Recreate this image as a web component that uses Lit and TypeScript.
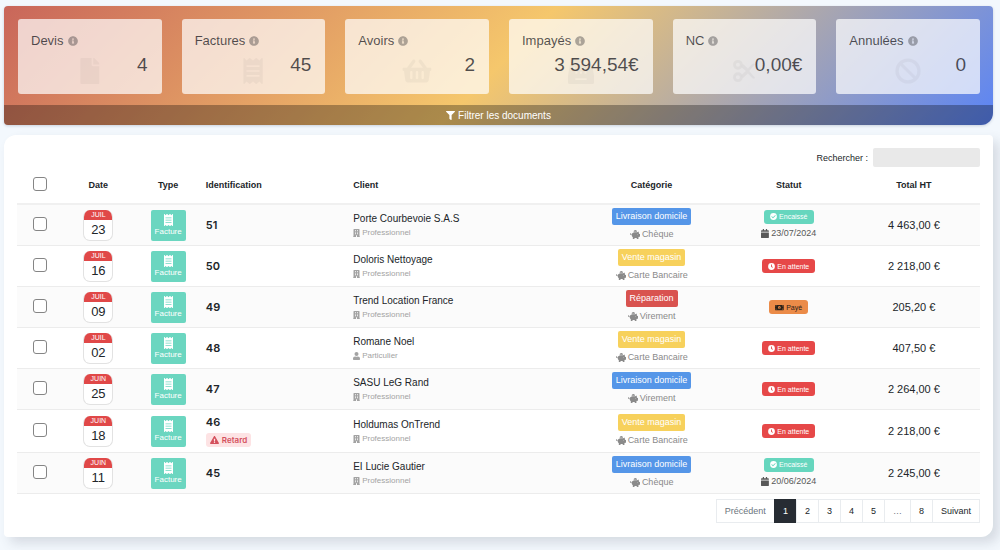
import { LitElement, html, css, svg, nothing } from "lit";
import { customElement, property } from "lit/decorators.js";

type Glyph = { box: string; body: unknown };

const ICONS: Record<string, Glyph> = {
  info: {
    box: "0 0 512 512",
    body: svg`<path d="M256 8C119.043 8 8 119.083 8 256c0 136.997 111.043 248 248 248s248-111.003 248-248C504 119.083 392.957 8 256 8zm0 110c23.196 0 42 18.804 42 42s-18.804 42-42 42-42-18.804-42-42 18.804-42 42-42zm56 254c0 6.627-5.373 12-12 12h-88c-6.627 0-12-5.373-12-12v-24c0-6.627 5.373-12 12-12h12v-64h-12c-6.627 0-12-5.373-12-12v-24c0-6.627 5.373-12 12-12h64c6.627 0 12 5.373 12 12v100h12c6.627 0 12 5.373 12 12v24z"/>`,
  },
  file: {
    box: "0 0 384 512",
    body: svg`<path d="M224 136V0H24C10.7 0 0 10.7 0 24v464c0 13.3 10.7 24 24 24h336c13.3 0 24-10.7 24-24V160H248c-13.2 0-24-10.8-24-24zm160-14.1v6.1H256V0h6.1c6.4 0 12.5 2.5 17 7l97.9 98c4.500 4.500 7 10.600 7 16.900z"/>`,
  },
  receipt: {
    box: "0 0 384 512",
    body: svg`<path fill-rule="evenodd" d="M358.4 3.200L320 48 265.600 3.200a15.900 15.900 0 0 0-19.200 0L192 48 137.600 3.200a15.900 15.900 0 0 0-19.200 0L64 48 25.600 3.200C15-4.700 0 2.800 0 16v480c0 13.200 15 20.700 25.600 12.800L64 464l54.400 44.800a15.900 15.900 0 0 0 19.200 0L192 464l54.400 44.800a15.900 15.900 0 0 0 19.200 0L320 464l38.400 44.800c10.500 7.900 25.600.4 25.600-12.800V16c0-13.200-15-20.700-25.600-12.800zM64 144h256v32H64zM64 240h256v32H64zM64 336h256v32H64z"/>`,
  },
  basket: {
    box: "0 0 576 512",
    body: svg`<path d="M576 216v16c0 13.255-10.745 24-24 24h-8l-26.113 182.788C514.509 462.435 494.257 480 470.370 480H105.630c-23.887 0-44.139-17.565-47.518-41.212L32 256h-8c-13.255 0-24-10.745-24-24v-16c0-13.255 10.745-24 24-24h67.341l106.780-146.821c10.395-14.292 30.407-17.453 44.701-7.058 14.293 10.395 17.453 30.408 7.058 44.701L170.477 192h235.046L326.120 82.821c-10.395-14.292-7.234-34.306 7.059-44.701 14.291-10.395 34.306-7.235 44.701 7.058L484.659 192H552c13.255 0 24 10.745 24 24zM312 392V280c0-13.255-10.745-24-24-24s-24 10.745-24 24v112c0 13.255 10.745 24 24 24s24-10.745 24-24zm112 0V280c0-13.255-10.745-24-24-24s-24 10.745-24 24v112c0 13.255 10.745 24 24 24s24-10.745 24-24zm-224 0V280c0-13.255-10.745-24-24-24s-24 10.745-24 24v112c0 13.255 10.745 24 24 24s24-10.745 24-24z"/>`,
  },
  register: {
    box: "0 0 512 512",
    body: svg`<path fill-rule="evenodd" d="M64 0h176a16 16 0 0 1 16 16v64a16 16 0 0 1-16 16h-56v32h264a32 32 0 0 1 31 27l33 197v128a32 32 0 0 1-32 32H32a32 32 0 0 1-32-32V352l33-197a32 32 0 0 1 31-27h56V96H64a16 16 0 0 1-16-16V16A16 16 0 0 1 64 0zM100 184v40h40v-40zM190 184v40h40v-40zM280 184v40h40v-40zM370 184v40h40v-40zM145 268v40h40v-40zM235 268v40h40v-40zM325 268v40h40v-40zM144 400v32h224v-32z"/>`,
  },
  scissors: {
    box: "0 0 448 512",
    body: svg`<g fill="none" stroke="currentColor"><circle cx="104" cy="134" r="68" stroke-width="56"/><circle cx="104" cy="378" r="68" stroke-width="56"/></g><path d="M150 160L262 256 150 352l54 44L300 306l82 82c22 22 46 22 62 8L326 256 444 116c-16-14-40-14-62 8l-82 82-96-90z"/>`,
  },
  ban: {
    box: "0 0 512 512",
    body: svg`<path fill-rule="evenodd" d="M256 8a248 248 0 1 1 0 496 248 248 0 0 1 0-496zM386 126A184 184 0 0 0 149 106L406 363A184 184 0 0 0 386 126zM126 386A184 184 0 0 0 363 406L106 149A184 184 0 0 0 126 386z"/>`,
  },
  filter: {
    box: "0 0 512 512",
    body: svg`<path d="M487.976 0H24.028C2.710 0-8.047 25.866 7.058 40.971L192 225.941V432c0 7.831 3.821 15.170 10.237 19.662l80 55.980C298.020 518.690 320 507.493 320 487.980V225.941l184.947-184.970C520.021 25.896 509.338 0 487.976 0z"/>`,
  },
  building: {
    box: "0 0 448 512",
    body: svg`<path fill-rule="evenodd" d="M56 0h336a24 24 0 0 1 24 24v452h20a12 12 0 0 1 12 12v24H256V396h-64v116H0v-24a12 12 0 0 1 12-12h20V24A24 24 0 0 1 56 0zM128 72v56h64V72zM256 72v56h64V72zM128 172v56h64v-56zM256 172v56h64v-56zM128 272v56h64v-56zM256 272v56h64v-56z"/>`,
  },
  user: {
    box: "0 0 448 512",
    body: svg`<circle cx="224" cy="128" r="128"/><path d="M314 288h-17a174 174 0 0 1-146 0h-17A134 134 0 0 0 0 422v42a48 48 0 0 0 48 48h352a48 48 0 0 0 48-48v-42a134 134 0 0 0-134-134z"/>`,
  },
  piggy: {
    box: "0 0 576 512",
    body: svg`<path d="M560 224h-29.500c-8.800-20-21.600-37.700-37.400-52.500L512 96h-32c-29.400 0-55.400 13.500-73 34.300-7.600-1.100-15.100-2.300-23-2.300H256c-77.400 0-141.900 55-156.800 128H56c-14.800 0-26.500-13.500-23.500-28.800C34.700 215.800 45.400 208 57 208h1c3.300 0 6-2.700 6-6v-20c0-3.300-2.700-6-6-6-28.500 0-53.900 20.400-57.500 48.600C-3.900 258.800 22.700 288 56 288h40c0 52.200 25.400 98.100 64 127.300V496c0 8.800 7.200 16 16 16h64c8.800 0 16-7.200 16-16v-48h128v48c0 8.800 7.200 16 16 16h64c8.800 0 16-7.200 16-16v-80.700c11.800-8.900 22.300-19.400 31.300-31.300H560c8.800 0 16-7.200 16-16V240c0-8.800-7.200-16-16-16zm-128 64c-8.800 0-16-7.200-16-16s7.200-16 16-16 16 7.200 16 16-7.200 16-16 16zM256 96h128c5.400 0 10.700.4 15.900.8 0-.3.1-.5.1-.8 0-53-43-96-96-96s-96 43-96 96c0 2.100.5 4.100.6 6.200 15.200-3.900 31-6.200 47.400-6.200z"/>`,
  },
  check: {
    box: "0 0 512 512",
    body: svg`<path fill-rule="evenodd" d="M256 8a248 248 0 1 1 0 496 248 248 0 0 1 0-496zM227 387L411 203a16 16 0 0 0 0-23l-22-22a16 16 0 0 0-23 0L216 308l-70-70a16 16 0 0 0-23 0l-22 22a16 16 0 0 0 0 23l104 104a16 16 0 0 0 22 0z"/>`,
  },
  clock: {
    box: "0 0 512 512",
    body: svg`<path fill-rule="evenodd" d="M256 8a248 248 0 1 1 0 496 248 248 0 0 1 0-496zM224 104v164l100 84 38-46-74-62V104z"/>`,
  },
  money: {
    box: "0 0 640 512",
    body: svg`<path fill-rule="evenodd" d="M32 64h576a32 32 0 0 1 32 32v320a32 32 0 0 1-32 32H32a32 32 0 0 1-32-32V96a32 32 0 0 1 32-32zM48 112v64a64 64 0 0 0 64-64zM48 400h64a64 64 0 0 0-64-64zM592 112h-64a64 64 0 0 0 64 64zM592 400v-64a64 64 0 0 0-64 64zM320 144c-53 0-96 50-96 112s43 112 96 112 96-50 96-112-43-112-96-112z"/><path d="M300 200h36v92h20v28h-72v-28h20v-56h-20v-22z"/>`,
  },
  calendar: {
    box: "0 0 448 512",
    body: svg`<path d="M112 0h48a12 12 0 0 1 12 12v52h104V12a12 12 0 0 1 12-12h48a12 12 0 0 1 12 12v52h52a48 48 0 0 1 48 48v48H0v-48a48 48 0 0 1 48-48h52V12a12 12 0 0 1 12-12zM0 192h448v272a48 48 0 0 1-48 48H48a48 48 0 0 1-48-48z"/>`,
  },
  warning: {
    box: "0 0 576 512",
    body: svg`<path fill-rule="evenodd" d="M570 440c18 32-5 72-42 72H48c-37 0-60-40-42-72L246 24c19-32 65-32 84 0zM288 354a46 46 0 1 0 0 92 46 46 0 0 0 0-92zM244 189l8 136c0 6 6 11 12 11h48c6 0 12-5 12-11l8-136c0-7-5-13-12-13h-64c-7 0-12 6-12 13z"/>`,
  },
};

@customElement("ui-icon")
export class UiIcon extends LitElement {
  @property() name = "info";

  static styles = css`
    :host { display: inline-flex; flex: none; height: 8px; }
    svg { display: block; height: 100%; width: auto; fill: currentColor; }
  `;

  render() {
    const glyph = ICONS[this.name];
    return html`<svg viewBox=${glyph.box} aria-hidden="true">${glyph.body}</svg>`;
  }
}

const STATS = [
  { label: "Devis", value: "4", icon: "file" },
  { label: "Factures", value: "45", icon: "receipt" },
  { label: "Avoirs", value: "2", icon: "basket" },
  { label: "Impayés", value: "3 594,54€", icon: "register" },
  { label: "NC", value: "0,00€", icon: "scissors" },
  { label: "Annulées", value: "0", icon: "ban" },
];

@customElement("stats-banner")
export class StatsBanner extends LitElement {
  static styles = css`
    :host {
      display: block;
      overflow: hidden;
      border-radius: 4px 4px 12px 4px;
      background: linear-gradient(135deg, #c9665a 0%, #f5c76c 50%, #5a84f6 100%);
      box-shadow: 0 1px 3px rgba(40, 60, 100, 0.2);
    }
    .cards {
      display: grid;
      grid-template-columns: repeat(6, minmax(0, 1fr));
      gap: 20px;
      padding: 13px 13px 11px 14px;
    }
    .card {
      position: relative;
      box-sizing: border-box;
      height: 75px;
      padding: 13px 14px 0 13px;
      border-radius: 3px;
      background: rgba(255, 255, 255, 0.7);
      color: rgba(24, 24, 30, 0.75);
    }
    .label { display: flex; align-items: center; gap: 4px; font-size: 13px; line-height: 17px; }
    .label ui-icon { height: 10px; opacity: 0.45; }
    .value { position: relative; text-align: right; font-size: 19px; line-height: 22px; margin-top: 5px; }
    .mark { position: absolute; left: 50%; bottom: 10px; height: 26px; transform: translateX(-50%); opacity: 0.05; }
    .filter {
      display: flex;
      width: 100%;
      align-items: center;
      justify-content: center;
      gap: 3px;
      height: 20px;
      padding: 0;
      border: 0;
      background: rgba(0, 0, 0, 0.3);
      color: #fff;
      font: 10px "Liberation Sans", Arial, sans-serif;
      cursor: pointer;
    }
    .filter ui-icon { height: 9px; }
  `;

  render() {
    return html`
      <div class="cards">
        ${STATS.map(
          (s) => html`<div class="card">
            <ui-icon class="mark" name=${s.icon}></ui-icon>
            <div class="label">${s.label}<ui-icon name="info"></ui-icon></div>
            <div class="value">${s.value}</div>
          </div>`,
        )}
      </div>
      <button class="filter" type="button"><ui-icon name="filter"></ui-icon>Filtrer les documents</button>
    `;
  }
}

const CATEGORIES: Record<string, string> = {
  delivery: "Livraison domicile",
  shop: "Vente magasin",
  repair: "Réparation",
};

const STATUSES: Record<string, { label: string; icon: string }> = {
  cashed: { label: "Encaissé", icon: "check" },
  pending: { label: "En attente", icon: "clock" },
  paid: { label: "Payé", icon: "money" },
};

const ROWS = [
  { month: "JUIL", day: "23", id: "51", client: "Porte Courbevoie S.A.S", cat: "delivery", pay: "Chèque", status: "cashed", on: "23/07/2024", total: "4 463,00 €" },
  { month: "JUIL", day: "16", id: "50", client: "Doloris Nettoyage", cat: "shop", pay: "Carte Bancaire", status: "pending", total: "2 218,00 €" },
  { month: "JUIL", day: "09", id: "49", client: "Trend Location France", cat: "repair", pay: "Virement", status: "paid", total: "205,20 €" },
  { month: "JUIL", day: "02", id: "48", client: "Romane Noel", person: true, cat: "shop", pay: "Carte Bancaire", status: "pending", total: "407,50 €" },
  { month: "JUIN", day: "25", id: "47", client: "SASU LeG Rand", cat: "delivery", pay: "Virement", status: "pending", total: "2 264,00 €" },
  { month: "JUIN", day: "18", id: "46", late: true, client: "Holdumas OnTrend", cat: "shop", pay: "Carte Bancaire", status: "pending", total: "2 218,00 €" },
  { month: "JUIN", day: "11", id: "45", client: "EI Lucie Gautier", cat: "delivery", pay: "Chèque", status: "cashed", on: "20/06/2024", total: "2 245,00 €" },
];

@customElement("documents-table")
export class DocumentsTable extends LitElement {
  static styles = css`
    :host { display: block; }
    table { width: 100%; table-layout: fixed; border-collapse: separate; border-spacing: 0; }
    .c-check { width: 4.8%; }
    .c-date { width: 7.3%; }
    .c-type { width: 7.2%; }
    .c-id { width: 15.3%; }
    .c-client { width: 23.9%; }
    .c-cat { width: 14.8%; }
    .c-status { width: 13.7%; }
    th, td { padding: 0 3px; text-align: center; vertical-align: middle; box-sizing: border-box; }
    th { height: 38px; border-bottom: 2px solid #f0f0f0; font-size: 9px; font-weight: 700; }
    td { height: 41px; border-bottom: 1px solid #ececec; }
    tbody tr:nth-child(odd) { background: #fbfbfb; }
    .left { text-align: left; }
    .pick { padding-bottom: 3px; }
    .total { padding-right: 10px; }
    td.total { font-size: 11px; }
    input {
      appearance: none;
      display: block;
      width: 14px;
      height: 14px;
      margin: 0 auto;
      border: 1px solid #858585;
      border-radius: 3px;
      background: #fff;
    }
    .day {
      box-sizing: border-box;
      width: 30px;
      margin: 0 auto;
      overflow: hidden;
      border: 1px solid #e2e2e2;
      border-top: 0;
      border-radius: 7px;
      background: #fff;
      font-size: 13px;
      line-height: 20px;
    }
    .month { display: block; margin: 0 -1px; background: #e04848; color: #fff; font-size: 7px; line-height: 10px; }
    .type {
      display: flex;
      flex-direction: column;
      align-items: center;
      box-sizing: border-box;
      width: 35px;
      height: 31px;
      margin: 0 auto;
      padding-top: 4px;
      border-radius: 2px;
      background: #6bd6c0;
      color: #fff;
      font-size: 8px;
      line-height: 12px;
    }
    .type ui-icon { height: 12px; }
    .number { font: 600 11px/14px Inter, "Open Sans", sans-serif; }
    .late {
      display: inline-flex;
      align-items: center;
      gap: 3px;
      height: 14px;
      padding: 0 4px;
      border-radius: 3px;
      background: #fde3e4;
      color: #d4505c;
      font: 600 8px/14px Inter, "Open Sans", sans-serif;
    }
    .ident { display: flex; flex-direction: column; align-items: flex-start; gap: 4px; }
    .flagged { padding: 5px 0; }
    .client { font-size: 10px; line-height: 15px; }
    .kind { display: flex; align-items: center; gap: 2px; font-size: 8px; line-height: 14px; color: #a3a3a3; }
    .stack { display: flex; flex-direction: column; align-items: center; }
    .category { padding-top: 2px; }
    .cat { height: 17px; padding: 0 4px; border-radius: 2px; color: #fff; font-size: 9px; line-height: 17px; }
    .delivery { background: #5596e8; }
    .shop { background: #f7d15c; }
    .repair { background: #d9534f; }
    .pay { display: flex; align-items: center; gap: 2px; font-size: 9px; line-height: 19px; color: #8a8a8a; }
    .pay ui-icon { height: 9px; }
    .status { display: flex; align-items: center; gap: 2px; height: 14px; padding: 0 6px; border-radius: 3px; color: #fff; font-size: 7px; }
    .status ui-icon { height: 7px; }
    .cashed { background: #66d6be; }
    .pending { background: #e64848; }
    .paid { background: #eb8b48; color: #2b2118; }
    .on { display: flex; align-items: center; gap: 2px; margin-top: 2px; font-size: 9px; line-height: 15px; color: #585858; }
    .on ui-icon { height: 9px; }
  `;

  render() {
    return html`
      <table>
        <colgroup>
          <col class="c-check" /><col class="c-date" /><col class="c-type" /><col class="c-id" />
          <col class="c-client" /><col class="c-cat" /><col class="c-status" /><col />
        </colgroup>
        <thead>
          <tr>
            <th class="pick"><input type="checkbox" aria-label="Tout sélectionner" /></th>
            <th>Date</th>
            <th>Type</th>
            <th class="left">Identification</th>
            <th class="left">Client</th>
            <th>Catégorie</th>
            <th>Statut</th>
            <th class="total">Total HT</th>
          </tr>
        </thead>
        <tbody>
          ${ROWS.map((r) => {
            const status = STATUSES[r.status];
            return html`<tr>
              <td class="pick"><input type="checkbox" aria-label=${`Sélectionner ${r.id}`} /></td>
              <td><div class="day"><span class="month">${r.month}</span>${r.day}</div></td>
              <td><div class="type"><ui-icon name="receipt"></ui-icon>Facture</div></td>
              <td class="left">
                <div class="ident ${r.late ? "flagged" : ""}">
                  <span class="number">${r.id}</span>
                  ${r.late ? html`<span class="late"><ui-icon name="warning"></ui-icon>Retard</span>` : nothing}
                </div>
              </td>
              <td class="left">
                <div class="client">${r.client}</div>
                <div class="kind">
                  <ui-icon name=${r.person ? "user" : "building"}></ui-icon>${r.person ? "Particulier" : "Professionnel"}
                </div>
              </td>
              <td>
                <div class="stack category">
                  <span class="cat ${r.cat}">${CATEGORIES[r.cat]}</span>
                  <span class="pay"><ui-icon name="piggy"></ui-icon>${r.pay}</span>
                </div>
              </td>
              <td>
                <div class="stack">
                  <span class="status ${r.status}"><ui-icon name=${status.icon}></ui-icon>${status.label}</span>
                  ${r.on ? html`<span class="on"><ui-icon name="calendar"></ui-icon>${r.on}</span>` : nothing}
                </div>
              </td>
              <td class="total">${r.total}</td>
            </tr>`;
          })}
        </tbody>
      </table>
    `;
  }
}

const PAGES = ["Précédent", "1", "2", "3", "4", "5", "…", "8", "Suivant"];

@customElement("app-root")
export class AppRoot extends LitElement {
  static styles = css`
    :host {
      display: block;
      box-sizing: border-box;
      min-height: 100vh;
      padding: 6px 7px 13px 4px;
      background: #f3f8fd;
      color: #212529;
      font-family: "Liberation Sans", Arial, sans-serif;
    }
    .panel {
      margin-top: 10px;
      padding: 13px 13px 14px;
      border-radius: 12px 4px 12px 4px;
      background: #fff;
      box-shadow: 6px 6px 12px rgba(60, 70, 90, 0.16);
    }
    .search { display: flex; align-items: center; justify-content: flex-end; gap: 5px; font-size: 9px; }
    .search input {
      box-sizing: border-box;
      width: 107px;
      height: 19px;
      padding: 0 5px;
      border: 0;
      border-radius: 2px;
      background: #e9e9e9;
      font: inherit;
    }
    .pages { display: flex; justify-content: flex-end; margin-top: 5px; }
    .page {
      height: 24px;
      padding: 0 8px;
      border: 1px solid #e9ecef;
      border-right-width: 0;
      background: #fff;
      color: #212529;
      font: 9px "Liberation Sans", Arial, sans-serif;
      cursor: pointer;
    }
    .page:last-child { border-right-width: 1px; }
    .muted { color: #6c757d; }
    .current { border-color: #272c33; background: #272c33; color: #fff; }
  `;

  render() {
    return html`
      <stats-banner></stats-banner>
      <main class="panel">
        <div class="search">
          <label for="search">Rechercher :</label>
          <input id="search" type="search" />
        </div>
        <documents-table></documents-table>
        <nav class="pages" aria-label="Pagination">
          ${PAGES.map(
            (p) => html`<button
              type="button"
              class="page ${p === "1" ? "current" : p === "Précédent" || p === "…" ? "muted" : ""}"
            >${p}</button>`,
          )}
        </nav>
      </main>
    `;
  }
}
